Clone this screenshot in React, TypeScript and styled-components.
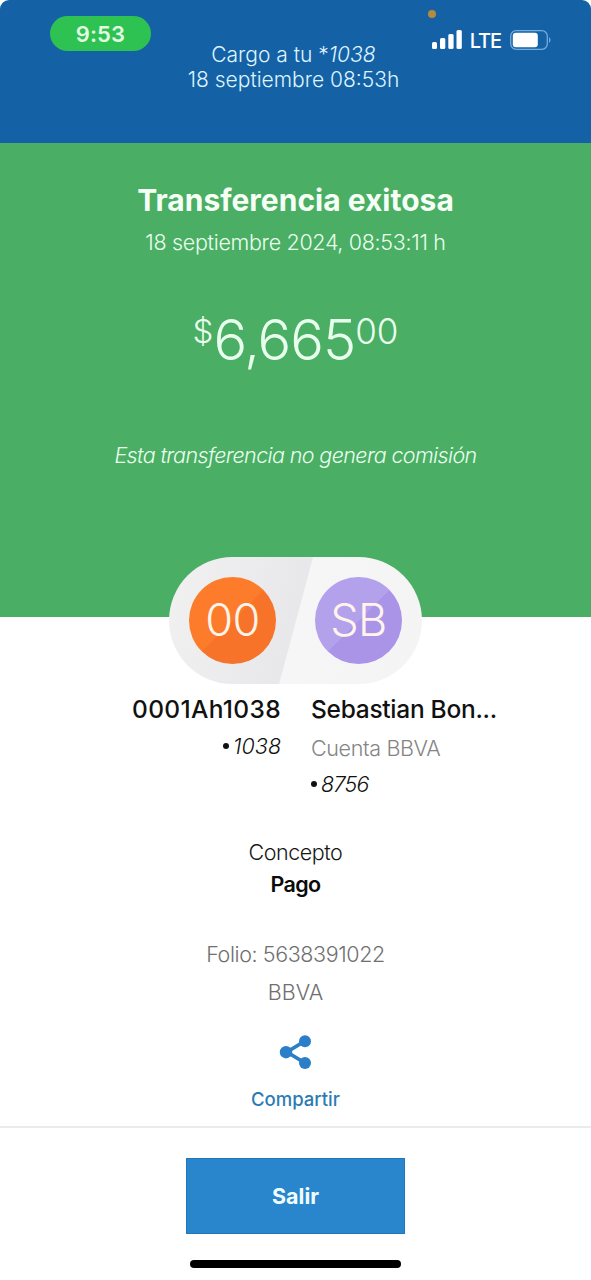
import React from "react";
import styled, { createGlobalStyle } from "styled-components";

const GlobalStyle = createGlobalStyle`
  * { box-sizing: border-box; }
  html, body { margin: 0; background: #fff; }
  body { font-family: Inter, "Noto Sans", sans-serif; }
`;

type TextProps = {
  $size: number;
  $line: number;
  $weight?: number;
  $color?: string;
  $italic?: boolean;
  $spacing?: number;
  $top?: number;
};

const Text = styled.div<TextProps>`
  font-size: ${(p) => p.$size}px;
  line-height: ${(p) => p.$line}px;
  font-weight: ${(p) => p.$weight ?? 300};
  font-style: ${(p) => (p.$italic ? "italic" : "normal")};
  color: ${(p) => p.$color ?? "inherit"};
  letter-spacing: ${(p) => p.$spacing ?? 0}px;
  margin-top: ${(p) => p.$top ?? 0}px;
  white-space: nowrap;
`;

const Screen = styled.div`
  position: relative;
  display: flex;
  flex-direction: column;
  width: 591px;
  height: 1280px;
  overflow: hidden;
  background: #fff;
`;

const StatusBar = styled.div`
  position: absolute;
  inset: 0 0 auto 0;
  display: flex;
  justify-content: space-between;
  align-items: flex-start;
  padding: 16px 39px 0 50px;
`;

const TimePill = styled.div`
  width: 101px;
  height: 35px;
  border-radius: 18px;
  background: #2dc252;
  color: #e2fbe2;
  font-size: 22px;
  line-height: 37px;
  font-weight: 600;
  letter-spacing: 0.1px;
  text-align: center;
`;

const Indicators = styled.div`
  position: relative;
  display: flex;
  align-items: center;
  height: 47px;
  color: #fff;
`;

const MicDot = styled.span`
  position: absolute;
  top: -6px;
  left: -4px;
  width: 8px;
  height: 8px;
  border-radius: 50%;
  background: #b78b3f;
`;

const Network = styled.span`
  margin: 2px 9px 0 8px;
  font-size: 20px;
  font-weight: 500;
  letter-spacing: -1.1px;
`;

const Header = styled.header`
  flex: none;
  height: 143px;
  padding: 42px 4px 0 0;
  border-radius: 9px 9px 0 0;
  background: #1462a5;
  color: #dff4ff;
  text-align: center;
`;

const Success = styled.section`
  flex: none;
  height: 474px;
  display: flex;
  flex-direction: column;
  align-items: center;
  padding-top: 37px;
  background: #4aae64;
  color: #e9ffee;
`;

const Amount = styled.div`
  display: flex;
  align-items: flex-start;
  margin-top: 49px;
  height: 68px;
  font-weight: 300;
`;

const Parties = styled.div`
  position: relative;
  flex: none;
  display: flex;
  align-items: center;
  justify-content: space-between;
  align-self: center;
  width: 253px;
  height: 127px;
  margin-top: -60px;
  padding: 0 20px;
  border-radius: 64px;
  background: linear-gradient(105deg, #f1f1f2 0%, #e8e8ea 50%, #f6f6f7 50.4%, #f4f4f5 100%);
`;

const Avatar = styled.div<{ $base: string; $shade: string }>`
  width: 87px;
  height: 87px;
  border-radius: 50%;
  background: linear-gradient(135deg, ${(p) => p.$base} 50%, ${(p) => p.$shade} 50.5%);
  color: #fff4ea;
  font-size: 45px;
  line-height: 86px;
  font-weight: 300;
  letter-spacing: -0.5px;
  text-align: center;
`;

const Accounts = styled.div`
  flex: none;
  display: grid;
  grid-template-columns: 281px 1fr;
  column-gap: 30px;
  height: 147px;
  padding-top: 7px;
  color: #111;
`;

const Account = styled.div<{ $end?: boolean }>`
  text-align: ${(p) => (p.$end ? "right" : "left")};
`;

const Bullet = styled.span`
  display: inline-block;
  width: 6px;
  height: 6px;
  margin-right: 4px;
  border-radius: 50%;
  background: #111;
  vertical-align: 5px;
`;

const Details = styled.div`
  flex: none;
  display: flex;
  flex-direction: column;
  align-items: center;
  height: 295px;
  padding-top: 6px;
  color: #171717;
`;

const ShareButton = styled.button`
  display: flex;
  flex-direction: column;
  align-items: center;
  margin-top: 28px;
  padding: 0;
  border: 0;
  background: none;
  font-family: inherit;
  color: #2a7cb4;
`;

const Footer = styled.footer`
  flex: 1;
  display: flex;
  flex-direction: column;
  align-items: center;
  border-top: 2px solid #ebebeb;
  padding-top: 30px;
`;

const ExitButton = styled.button`
  width: 219px;
  height: 76px;
  padding: 0;
  border: 1px solid #2077bb;
  background: #2985cc;
  color: #effcff;
  font: 700 21.5px/74px Inter, sans-serif;
`;

const HomeIndicator = styled.div`
  width: 211px;
  height: 8px;
  margin-top: 26px;
  border-radius: 4px;
  background: #000;
`;

const Signal = () => (
  <svg width="30" height="20" viewBox="0 0 30 20" fill="#fff">
    <rect x="0" y="12" width="5" height="7" rx="1.5" />
    <rect x="8" y="8" width="5.3" height="11" rx="1.5" />
    <rect x="16.3" y="4" width="5.3" height="15" rx="1.5" />
    <rect x="24.5" y="0" width="5.3" height="19" rx="1.5" />
  </svg>
);

const Battery = () => (
  <svg width="42" height="20" viewBox="0 0 42 20">
    <rect x="0.7" y="0.7" width="36.6" height="18.6" rx="5.5" fill="none" stroke="#77aadb" strokeWidth="1.3" />
    <rect x="2.8" y="2.8" width="25" height="14.4" rx="3" fill="#fff" />
    <path d="M39 7 Q42 10 39 13 Z" fill="#77aadb" />
  </svg>
);

const ShareIcon = () => (
  <svg width="32" height="34" viewBox="0 0 32 34" fill="#2a7fc8">
    <path d="M26 6 L8 17 L26 28" fill="none" stroke="#2a7fc8" strokeWidth="3.8" />
    <circle cx="26" cy="6.2" r="6" />
    <circle cx="7" cy="17.2" r="6.2" />
    <circle cx="26" cy="28" r="6" />
  </svg>
);

export default function App() {
  return (
    <Screen>
      <GlobalStyle />
      <Header>
        <Text $size={21} $line={25}>
          Cargo a tu *<i>1038</i>
        </Text>
        <Text $size={21} $line={25}>18 septiembre 08:53h</Text>
      </Header>
      <StatusBar>
        <TimePill>9:53</TimePill>
        <Indicators>
          <MicDot />
          <Signal />
          <Network>LTE</Network>
          <Battery />
        </Indicators>
      </StatusBar>

      <Success>
        <Text $size={30} $line={40} $weight={700} $color="#f6fff5">Transferencia exitosa</Text>
        <Text $size={21.5} $line={30} $top={7} $spacing={-0.32}>18 septiembre 2024, 08:53:11 h</Text>
        <Amount>
          <Text $size={33} $line={42} $top={4}>$</Text>
          <Text $size={56} $line={68} $spacing={-1}>6,665</Text>
          <Text $size={35} $line={42} $top={4}>00</Text>
        </Amount>
        <Text $size={21.5} $line={30} $top={66} $spacing={-0.62} $italic>Esta transferencia no genera comisión</Text>
      </Success>

      <Parties>
        <Avatar $base="#fc7c2b" $shade="#f7732a">00</Avatar>
        <Avatar $base="#b3a1ec" $shade="#aa94e8">SB</Avatar>
      </Parties>

      <Accounts>
        <Account $end>
          <Text $size={24.5} $line={36} $weight={500} $spacing={0.35}>0001Ah1038</Text>
          <Text $size={21.5} $line={36} $top={1} $italic><Bullet />1038</Text>
        </Account>
        <Account>
          <Text $size={24.5} $line={36} $weight={500} $spacing={-0.28}>Sebastian Bon...</Text>
          <Text $size={21.5} $line={36} $top={3} $spacing={-0.35} $color="#858585">Cuenta BBVA</Text>
          <Text $size={21.5} $line={36} $spacing={-0.7} $italic><Bullet />8756</Text>
        </Account>
      </Accounts>

      <Details>
        <Text $size={21.5} $line={30} $spacing={-0.45}>Concepto</Text>
        <Text $size={21.5} $line={30} $weight={600} $top={2} $spacing={-0.6} $color="#0b0b0b">Pago</Text>
        <Text $size={21.5} $line={30} $top={40} $spacing={-0.4} $color="#707070">Folio: 5638391022</Text>
        <Text $size={21.5} $line={30} $top={8} $color="#707070">BBVA</Text>
        <ShareButton>
          <ShareIcon />
          <Text $size={18.5} $line={26} $weight={500} $top={17}>Compartir</Text>
        </ShareButton>
      </Details>

      <Footer>
        <ExitButton>Salir</ExitButton>
        <HomeIndicator />
      </Footer>
    </Screen>
  );
}
